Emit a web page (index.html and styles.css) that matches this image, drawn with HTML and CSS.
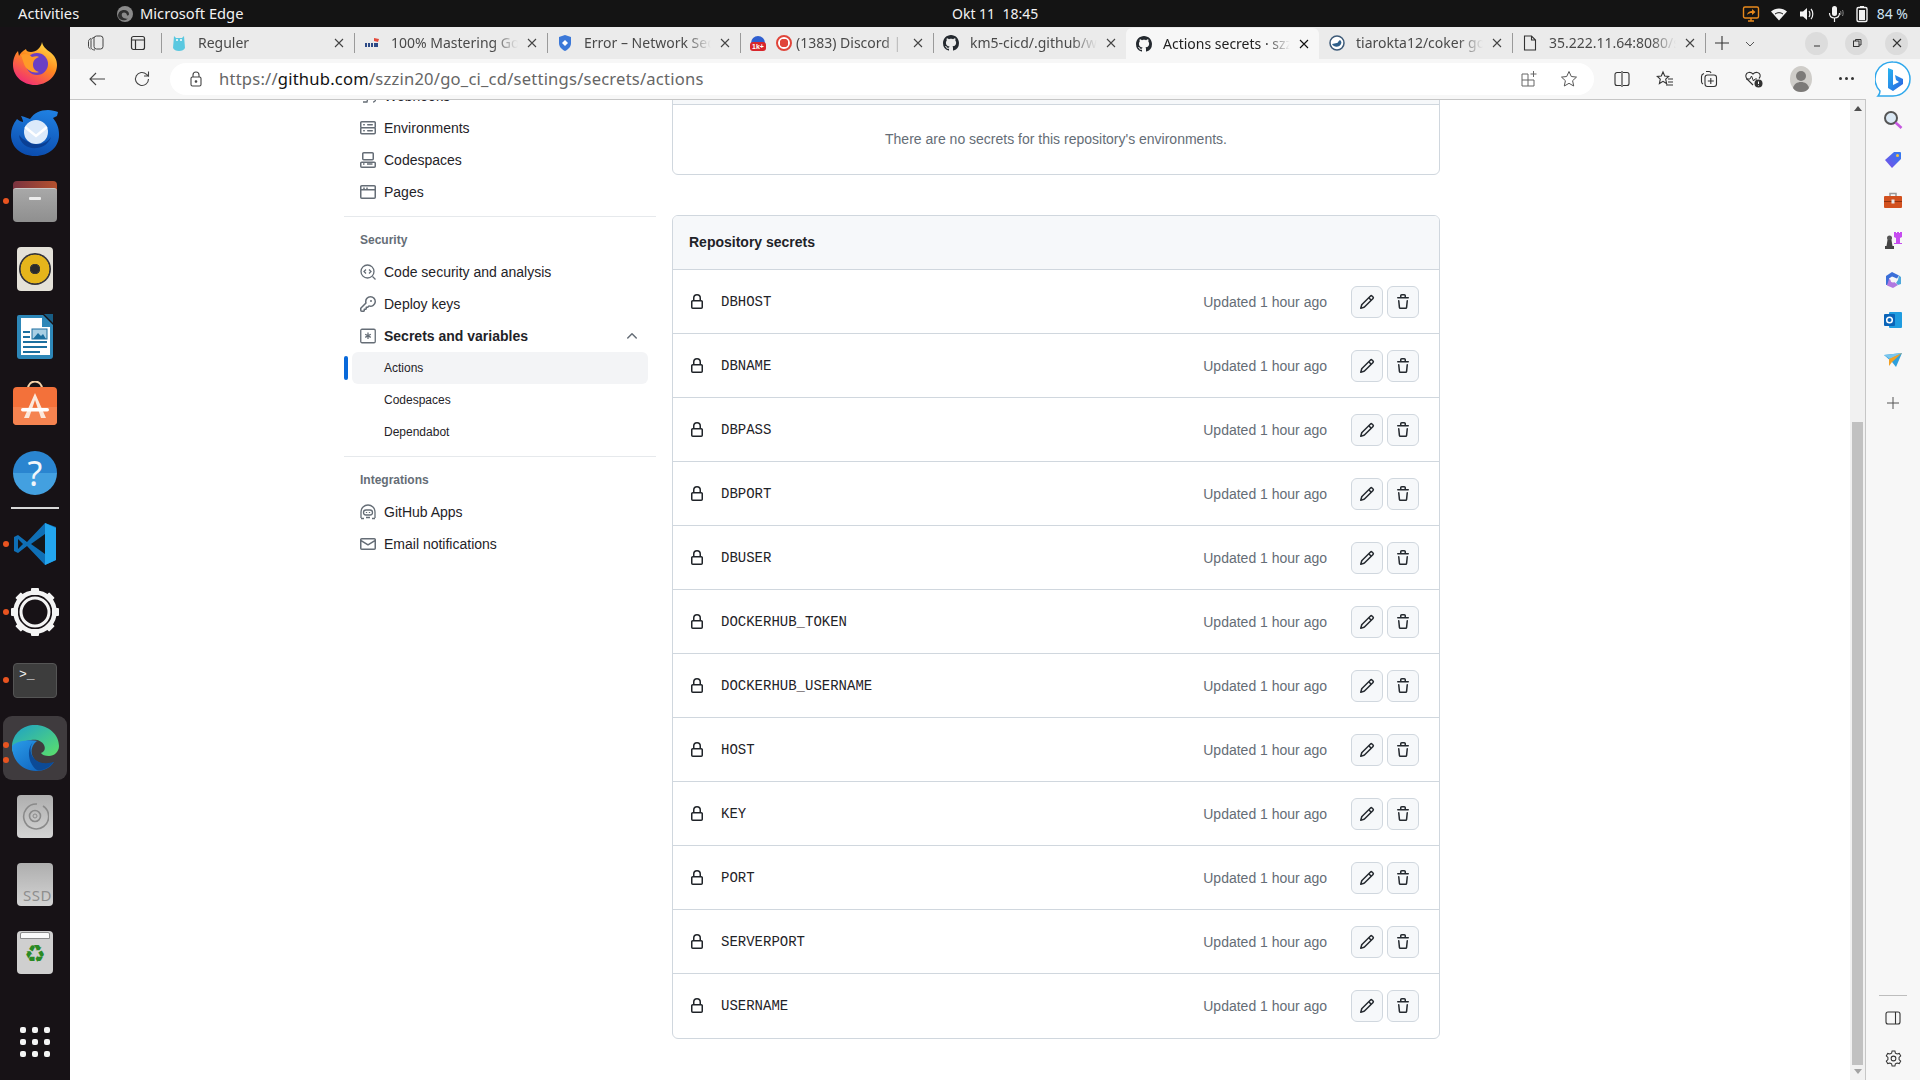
FILE: index.html
```html
<!DOCTYPE html>
<html lang="en">
<head>
<meta charset="utf-8">
<title>Actions secrets</title>
<link rel="stylesheet" href="styles.css">
</head>
<body>
<svg class="sprite" aria-hidden="true">
  <symbol id="i-lock" viewBox="0 0 16 16"><path d="M4 4a4 4 0 0 1 8 0v2h.25c.966 0 1.75.784 1.75 1.75v5.5A1.75 1.75 0 0 1 12.25 15h-8.5A1.75 1.75 0 0 1 2 13.25v-5.5C2 6.784 2.784 6 3.75 6H4Zm8.25 3.5h-8.5a.25.25 0 0 0-.25.25v5.5c0 .138.112.25.25.25h8.5a.25.25 0 0 0 .25-.25v-5.5a.25.25 0 0 0-.25-.25ZM10.5 6V4a2.5 2.5 0 1 0-5 0v2Z"/></symbol>
  <symbol id="i-pencil" viewBox="0 0 16 16"><path d="M11.013 1.427a1.75 1.75 0 0 1 2.474 0l1.086 1.086a1.75 1.75 0 0 1 0 2.474l-8.61 8.61c-.21.21-.47.364-.756.445l-3.251.93a.75.75 0 0 1-.927-.928l.929-3.25c.081-.286.235-.547.445-.758l8.61-8.61Zm.176 4.823L9.75 4.81l-6.286 6.287a.253.253 0 0 0-.064.108l-.558 1.953 1.953-.558a.253.253 0 0 0 .108-.064Zm1.238-3.763a.25.25 0 0 0-.354 0L10.811 3.75l1.439 1.44 1.263-1.263a.25.25 0 0 0 0-.354Z"/></symbol>
  <symbol id="i-trash" viewBox="0 0 16 16"><path d="M11 1.75V3h2.25a.75.75 0 0 1 0 1.5H2.75a.75.75 0 0 1 0-1.5H5V1.75C5 .784 5.784 0 6.75 0h2.5C10.216 0 11 .784 11 1.75ZM4.496 6.675l.66 6.6a.25.25 0 0 0 .249.225h5.19a.25.25 0 0 0 .249-.225l.66-6.6a.75.75 0 0 1 1.492.149l-.66 6.6A1.748 1.748 0 0 1 10.595 15h-5.19a1.75 1.75 0 0 1-1.741-1.575l-.66-6.6a.75.75 0 1 1 1.492-.15ZM6.5 1.75V3h3V1.75a.25.25 0 0 0-.25-.25h-2.5a.25.25 0 0 0-.25.25Z"/></symbol>
  <symbol id="i-gh" viewBox="0 0 16 16"><path d="M8 0c4.42 0 8 3.58 8 8a8.013 8.013 0 0 1-5.45 7.59c-.4.08-.55-.17-.55-.38 0-.27.01-1.13.01-2.2 0-.75-.25-1.23-.54-1.48 1.78-.2 3.65-.88 3.65-3.95 0-.88-.31-1.59-.82-2.15.08-.2.36-1.02-.08-2.12 0 0-.67-.22-2.2.82-.64-.18-1.32-.27-2-.27-.68 0-1.36.09-2 .27-1.53-1.03-2.2-.82-2.2-.82-.44 1.1-.16 1.92-.08 2.12-.51.56-.82 1.28-.82 2.15 0 3.06 1.86 3.75 3.64 3.95-.23.2-.44.55-.51 1.07-.46.21-1.61.55-2.33-.66-.15-.24-.6-.83-1.23-.82-.67.01-.27.38.01.53.34.19.73.9.82 1.13.16.45.68 1.31 2.69.94 0 .67.01 1.3.01 1.49 0 .21-.15.45-.55.38A7.995 7.995 0 0 1 0 8c0-4.42 3.58-8 8-8Z"/></symbol>
  <symbol id="i-x" viewBox="0 0 12 12"><path d="M2 2l8 8M10 2l-8 8" fill="none" stroke="currentColor" stroke-width="1.1"/></symbol>
</svg>

<header class="topbar">
  <span class="top-activities">Activities</span>
  <svg class="top-edge" width="18" height="18" viewBox="0 0 18 18"><circle cx="9" cy="9" r="8" fill="#8a8a8a"/><path d="M2 11c0-4 3-6 6-6 3 0 5 2 5 4 0 1-1 1.500-2 1.500 0-2-1.500-3-3-3-2.500 0-3 3-1 5 1 1 3 1.500 5 1-2 2-4 2-6 1.500-2-.5-4-2-4-4.500z" fill="#2e2e2e"/></svg>
  <span class="top-app">Microsoft Edge</span>
  <span class="top-clock">Okt 11&nbsp;&nbsp;18:45</span>
  <div class="tray">
    <svg width="18" height="18" viewBox="0 0 18 18"><rect x="1.500" y="2" width="15" height="11" rx="1.500" fill="none" stroke="#e8891c" stroke-width="1.400"/><path d="M5 10c.5-3 2.500-4 5-4V4l3.500 3L10 10V8c-2 0-3.500.5-5 2z" fill="#e8891c"/><path d="M6 16h6M9 13v3" stroke="#e8891c" stroke-width="1.400"/></svg>
    <svg width="18" height="18" viewBox="0 0 18 18"><path d="M1 6.500C5.500 2.500 12.500 2.500 17 6.500L9 15.500z" fill="#f2f2f2"/><path d="M5 9c2.400-1.800 5.600-1.800 8 0" fill="none" stroke="#141414" stroke-width="1"/></svg>
    <svg width="18" height="18" viewBox="0 0 18 18"><path d="M2 6.500h3L9 3v12l-4-3.500H2z" fill="#f2f2f2"/><path d="M11 6c1.200 1.500 1.200 4.500 0 6M13 4c2.400 2.500 2.400 7.500 0 10" fill="none" stroke="#f2f2f2" stroke-width="1.200"/></svg>
    <svg width="18" height="18" viewBox="0 0 18 18"><rect x="6" y="1" width="5" height="10" rx="2.500" fill="#f2f2f2"/><path d="M3.500 8c0 3.500 2.300 5 5 5s5-1.500 5-5M8.500 13v4" fill="none" stroke="#f2f2f2" stroke-width="1.200"/><path d="M14.500 6c.6 1 .6 3 0 4M16.500 5c.8 1.500.8 4.500 0 6" fill="none" stroke="#888" stroke-width="1"/></svg>
    <svg class="tray-batt" width="14" height="18" viewBox="0 0 14 18"><path d="M5 1h4v1.500H5z" fill="#f2f2f2"/><rect x="2" y="2.500" width="10" height="14" rx="1.500" fill="none" stroke="#f2f2f2" stroke-width="1.400"/><rect x="4" y="5" width="6" height="10" fill="#f2f2f2"/></svg>
    <span class="tray-pct">84 %</span>
  </div>
</header>

<div class="desktop">
  <nav class="dock">
    <div class="dock-item">
      <svg class="dock-ff" width="44" height="44" viewBox="0 0 44 44"><defs><linearGradient id="ff1" x1="0.8" y1="0" x2="0.2" y2="1"><stop offset="0" stop-color="#ffe14a"/><stop offset=".45" stop-color="#ff8a1f"/><stop offset="1" stop-color="#f0247e"/></linearGradient></defs><path d="M29 1c1 5 4 7 8 10 5 4 7 8 7 13 0 11-10 20-22 20S0 35 0 24c0-6 2-11 5-14l1 5c1-2 3-5 7-7 0 2 2 3 5 3 5 0 10-4 11-10z" fill="url(#ff1)"/><circle cx="24" cy="23" r="11" fill="#6b3fc4"/><path d="M8 14c4-2 8-1 11 2 3-1 6-1 7 0-3 1-6 3-6 8 0 3 2 6 6 7-6 2-13-2-15-8-1-3-2-6-3-9z" fill="#ff9a28"/></svg>
    </div>
    <div class="dock-item">
      <svg width="48" height="48" viewBox="0 0 48 48"><defs><linearGradient id="tb1" x1="0.6" y1="0" x2="0.4" y2="1"><stop offset="0" stop-color="#1f7fe0"/><stop offset="1" stop-color="#0b4cae"/></linearGradient></defs><path d="M47 3c-3-1-6-2-10-2-8 0-14 3-18 9-5-2-8-3-9-3 1 2 2 4 2 6-1 0-4-1-6-3C2 15 0 20 0 26c0 12 10 21 24 21s24-9 24-21c0-7-2-12-6-17l4-2z" fill="url(#tb1)"/><path d="M8 26c1 9 9 14 18 13 7-1 12-5 14-11-3 5-9 8-15 7-7-1-13-4-17-9z" fill="#0a3f94"/><circle cx="25" cy="23" r="12" fill="#dceafa"/><path d="M14 18l11 9 11-9" fill="none" stroke="#fff" stroke-width="2.500"/></svg>
    </div>
    <div class="dock-item has-dot">
      <div class="ic-files"><span class="ic-files-tab"></span><span class="ic-files-body"><i></i></span></div>
    </div>
    <div class="dock-item">
      <div class="ic-tile ic-rhythm"><span class="ic-speaker"></span></div>
    </div>
    <div class="dock-item">
      <svg width="38" height="46" viewBox="0 0 38 46"><path d="M3 1h24l10 10v31a3 3 0 0 1-3 3H4a3 3 0 0 1-3-3V3a2 2 0 0 1 2-2z" fill="#2d87b8"/><path d="M5 4h21v9h8v28H5z" fill="#fff"/><path d="M28 0l9 9v-9z" fill="#185d84"/><path d="M7 17h7v2H7zM7 22h7v2H7zM7 27h24v2H7zM7 32h24v2H7zM7 37h17v2H7z" fill="#1c6f9f"/><rect x="16" y="15" width="15" height="10" fill="#a9cfe4" stroke="#1c6f9f"/><path d="M17 25l5-6 3 3 2-2 3 5z" fill="#1c6f9f"/></svg>
    </div>
    <div class="dock-item">
      <svg class="dock-shop" width="44" height="44" viewBox="0 0 44 44"><path d="M15 8c0-10 14-10 14 0" fill="none" stroke="#f6d2a8" stroke-width="2"/><rect y="6" width="44" height="38" rx="4" fill="#f3713a"/><path d="M0 26h44v14a4 4 0 0 1-4 4H4a4 4 0 0 1-4-4z" fill="#f58350"/><path d="M22 12L11 37h5l6-18 6 18h5z" fill="#fbe8dc"/><rect x="8" y="27" width="28" height="3.500" rx="1.700" fill="#fff"/></svg>
    </div>
    <div class="dock-item">
      <div class="ic-help">?</div>
    </div>
    <div class="dock-sep"></div>
    <div class="dock-item has-dot">
      <svg width="44" height="44" viewBox="0 0 44 44"><path d="M32 1L14 20 5 13 1 15v14l4 2 9-7 18 19 11-5V5z" fill="#0f6fb6"/><path d="M32 1l11 5v32l-11 5z" fill="#23a5ee"/><path d="M32 12v20L18 22z" fill="#14161a"/><path d="M5 17l5 5-5 5z" fill="#14161a"/></svg>
    </div>
    <div class="dock-item has-dot">
      <svg width="48" height="48" viewBox="0 0 48 48"><circle cx="24" cy="24" r="19.500" fill="none" stroke="#f4f4f4" stroke-width="4.500"/><g fill="#f4f4f4"><rect x="20" y="0" width="8" height="7" rx="1"/><rect x="20" y="41" width="8" height="7" rx="1"/><rect x="0" y="20" width="7" height="8" rx="1"/><rect x="41" y="20" width="7" height="8" rx="1"/><rect x="20" y="0" width="8" height="7" rx="1" transform="rotate(45 24 24)"/><rect x="20" y="0" width="8" height="7" rx="1" transform="rotate(135 24 24)"/><rect x="20" y="0" width="8" height="7" rx="1" transform="rotate(225 24 24)"/><rect x="20" y="0" width="8" height="7" rx="1" transform="rotate(315 24 24)"/></g><circle cx="24" cy="24" r="14" fill="none" stroke="#f4f4f4" stroke-width="3"/></svg>
    </div>
    <div class="dock-item has-dot">
      <div class="ic-term"><span>&gt;_</span></div>
    </div>
    <div class="dock-item dock-active has-dots">
      <svg width="48" height="48" viewBox="0 0 48 48"><defs><linearGradient id="ed1" x1="0" y1="0" x2="1" y2="1"><stop offset="0" stop-color="#1da0c8"/><stop offset="1" stop-color="#5ce06a"/></linearGradient><linearGradient id="ed2" x1="0" y1="0" x2="1" y2="1"><stop offset="0" stop-color="#2a9be8"/><stop offset="1" stop-color="#0b5bb8"/></linearGradient></defs><path d="M1 22C2 9 12 1 24 1c14 0 24 10 24 21 0 6-5 10-10 10-4 0-7-1-8-3 3-1 5-4 3-8-2-4-7-6-13-5C12 17 5 20 1 28z" fill="url(#ed1)"/><path d="M1 22c0 14 10 25 24 25 8 0 14-3 18-9-4 2-9 3-14 1-8-3-11-12-6-19 1-1 2-3 4-3-9-2-22 0-26 5z" fill="url(#ed2)"/><path d="M22 18c-5 7-2 16 6 20 5 2 11 1 15 0-5 6-11 9-17 8-7-4-12-19-4-28z" fill="#0c4a96"/></svg>
    </div>
    <div class="dock-item">
      <div class="ic-tile ic-gray"><svg width="28" height="28" viewBox="0 0 28 28"><path d="M22 4a12.500 12.500 0 1 1-6-2" fill="none" stroke="#8a8a8a" stroke-width="1.600"/><circle cx="14" cy="14" r="5.500" fill="none" stroke="#8a8a8a" stroke-width="1.600"/><circle cx="14" cy="14" r="2" fill="none" stroke="#8a8a8a" stroke-width="1"/></svg></div>
    </div>
    <div class="dock-item">
      <div class="ic-tile ic-gray ic-ssd">SSD</div>
    </div>
    <div class="dock-item">
      <div class="ic-tile ic-gray ic-trash"><span class="ic-trash-lid"></span><span class="ic-trash-sym">♻</span></div>
    </div>
    <div class="dock-grid">
      <i></i><i></i><i></i><i></i><i></i><i></i><i></i><i></i><i></i>
    </div>
  </nav>

  <div class="browser">
    <div class="tabstrip">
      <div class="strip-tools">
        <svg width="18" height="18" viewBox="0 0 18 18" fill="none" stroke="#444" stroke-width="1"><rect x="7" y="2" width="9" height="13" rx="2.500"/><path d="M7 3.500c-1.500.5-3 1-3 3v7c0 1.500 2 2.500 4 2.500M4 4.500c-1.500.5-2.500 1.500-2.500 3v5c0 1 1 2 2 2.500"/></svg>
        <svg width="16" height="16" viewBox="0 0 16 16" fill="none" stroke="#333" stroke-width="1.200"><rect x="1.500" y="1.500" width="13" height="13" rx="2"/><path d="M1.500 5h13M5.500 5v9.500"/></svg>
      </div>
      <div class="tab">
        <span class="tab-ic"><svg width="14" height="18" viewBox="0 0 14 18"><path d="M2 2l2 2h6l2-2 1 12c-1 2-3 3-6 3s-5-1-6-3z" fill="#5ac8e0"/><circle cx="5" cy="6" r="1" fill="#fff"/><circle cx="9" cy="6" r="1" fill="#fff"/></svg></span>
        <span class="tab-title">Reguler</span>
        <svg class="tab-x"><use href="#i-x"/></svg>
      </div>
      <div class="tab">
        <span class="tab-ic"><svg width="16" height="12" viewBox="0 0 16 12"><path d="M1 6h2v4H1zM4 6h2v4H4zM7 6h2v4H7z" fill="#2d4a86"/><path d="M10 6h4v4h-4z" fill="#2d4a86"/><path d="M10 1l5 1-1 3-4-1z" fill="#e34b3c"/></svg></span>
        <span class="tab-title">100% Mastering Golang</span>
        <svg class="tab-x"><use href="#i-x"/></svg>
      </div>
      <div class="tab">
        <span class="tab-ic"><svg width="14" height="16" viewBox="0 0 14 16"><path d="M7 0l6 2v6c0 4-3 6.500-6 8-3-1.500-6-4-6-8V2z" fill="#3b78d8"/><path d="M4 8l3-3 3 3-3 3z" fill="#fff"/></svg></span>
        <span class="tab-title">Error – Network Security</span>
        <svg class="tab-x"><use href="#i-x"/></svg>
      </div>
      <div class="tab">
        <span class="tab-ic"><svg width="16" height="18" viewBox="0 0 16 18"><path d="M1 9a7 7 0 0 1 14 0z" fill="#2f5fd0"/><rect y="8" width="16" height="9" rx="3" fill="#d8262c"/><text x="8" y="15" class="tab-badge">1k+</text></svg></span>
        <span class="tab-rec"></span>
        <span class="tab-title tab-title-b">(1383) Discord | #general</span>
        <svg class="tab-x"><use href="#i-x"/></svg>
      </div>
      <div class="tab">
        <span class="tab-ic"><svg class="ic-gh" width="16" height="16"><use href="#i-gh"/></svg></span>
        <span class="tab-title">km5-cicd/.github/workflows</span>
        <svg class="tab-x"><use href="#i-x"/></svg>
      </div>
      <div class="tab tab-active">
        <span class="tab-ic"><svg class="ic-gh" width="16" height="16"><use href="#i-gh"/></svg></span>
        <span class="tab-title">Actions secrets · szzin20/go</span>
        <svg class="tab-x"><use href="#i-x"/></svg>
      </div>
      <div class="tab tab-after">
        <span class="tab-ic"><svg width="16" height="16" viewBox="0 0 16 16"><circle cx="8" cy="8" r="7" fill="#fff" stroke="#3d5a78" stroke-width="1.500"/><path d="M3 9c2 0 3-1 5-1 1 0 1-2 3-3 1 1 2 2 1 4-1 3-7 4-9 0z" fill="#2f5f8a"/></svg></span>
        <span class="tab-title">tiarokta12/coker golang</span>
        <svg class="tab-x"><use href="#i-x"/></svg>
      </div>
      <div class="tab">
        <span class="tab-ic"><svg width="14" height="16" viewBox="0 0 14 16" fill="none" stroke="#333" stroke-width="1.100"><path d="M1.500 1h7l4 4v10h-11zM8.500 1v4h4"/></svg></span>
        <span class="tab-title">35.222.11.64:8080/swagger</span>
        <svg class="tab-x"><use href="#i-x"/></svg>
      </div>
      <div class="tab-new">
        <svg width="16" height="16" viewBox="0 0 16 16"><path d="M8 1v14M1 8h14" stroke="#333" stroke-width="1.100"/></svg>
        <svg class="tab-more" width="10" height="6" viewBox="0 0 10 6"><path d="M1 1l4 4 4-4" fill="none" stroke="#555" stroke-width="1"/></svg>
      </div>
      <div class="win-btns">
        <span class="win-btn"><svg width="10" height="10" viewBox="0 0 10 10"><path d="M2 8h6" stroke="#333"/></svg></span>
        <span class="win-btn"><svg width="10" height="10" viewBox="0 0 10 10" fill="none" stroke="#333"><rect x="1.500" y="3" width="5.500" height="5.500"/><path d="M3.500 3V1.500H9v5.500H7"/></svg></span>
        <span class="win-btn"><svg width="10" height="10" viewBox="0 0 10 10"><path d="M1 1l8 8M9 1l-8 8" stroke="#333" stroke-width="1.100"/></svg></span>
      </div>
    </div>

    <div class="browser-body">
      <div class="viewport-col">
        <div class="toolbar">
          <div class="nav-btns">
            <svg width="18" height="16" viewBox="0 0 18 16"><path d="M17 8H2M8 2L2 8l6 6" fill="none" stroke="#444" stroke-width="1.100"/></svg>
            <svg width="18" height="18" viewBox="0 0 18 18"><path d="M15.500 9a6.500 6.500 0 1 1-2-4.700L15.500 6V1.500M15.500 6H11" fill="none" stroke="#444" stroke-width="1.100"/></svg>
          </div>
          <div class="address">
            <svg class="addr-lock" width="14" height="16" viewBox="0 0 14 16" fill="none" stroke="#444" stroke-width="1.100"><rect x="2" y="6" width="10" height="9" rx="1.500"/><path d="M4 6V4a3 3 0 0 1 6 0v2"/><circle cx="7" cy="10.500" r=".8" fill="#444"/></svg>
            <span class="url">https://<b>github.com</b>/szzin20/go_ci_cd/settings/secrets/actions</span>
            <svg class="addr-apps" width="18" height="18" viewBox="0 0 18 18" fill="none" stroke="#666" stroke-width="1"><path d="M8 4H2v12h12v-6M2 10h12M8 4v12"/><path d="M13.500 1v6M10.500 4h6"/></svg>
            <svg class="addr-star" width="18" height="18" viewBox="0 0 18 18"><path d="M9 1.500l2.300 5 5.200.6-3.900 3.600 1.100 5.300L9 13.300 4.300 16l1.100-5.300L1.500 7.100l5.200-.6z" fill="none" stroke="#555" stroke-width="1"/></svg>
          </div>
          <div class="tool-icons">
            <svg width="16" height="16" viewBox="0 0 16 16" fill="none" stroke="#333" stroke-width="1.100"><path d="M7 1.500H3a2 2 0 0 0-2 2v9a2 2 0 0 0 2 2h4M9 1.500h4a2 2 0 0 1 2 2v9a2 2 0 0 1-2 2H9M8 0v16"/></svg>
            <svg width="18" height="18" viewBox="0 0 18 18" fill="none" stroke="#333" stroke-width="1.100"><path d="M7 2l1.700 4 4 .4-3 2.800.9 4.300L7 11.300 3.400 13.500l.9-4.300-3-2.800 4-.4zM12 9h5M12 12h5M10 15h7"/></svg>
            <svg width="18" height="18" viewBox="0 0 18 18" fill="none" stroke="#333" stroke-width="1.100"><path d="M6 1.500h3a2 2 0 0 1 2 1.500M4 3.500C2.500 4 1.500 5 1.500 6.500v5c0 1 .5 2 1.500 2.500"/><rect x="5" y="5" width="11.500" height="11.500" rx="2.500"/><path d="M10.800 8v6M7.800 11h6"/></svg>
            <svg width="20" height="20" viewBox="0 0 20 20"><path d="M9 16L3 10C1 8 1.500 4 4.500 3.500 6.500 3 8 4 9 5c1-1 2.500-2 4.500-1.500 3 .5 3.500 4 1.500 6" fill="none" stroke="#333" stroke-width="1.100"/><path d="M2 10h4l1.500-3 2 5 1.500-2h2" fill="none" stroke="#333" stroke-width="1"/><circle cx="14.500" cy="14.500" r="4" fill="#333"/><path d="M14.500 12.500v2.500M14.500 16v.6" stroke="#fff"/></svg>
            <svg class="avatar" width="22" height="26" viewBox="0 0 22 26"><ellipse cx="11" cy="13" rx="11" ry="13" fill="#cfcdc9"/><circle cx="11" cy="10" r="5" fill="#7c7a78"/><path d="M3 22c1-4 4-6 8-6s7 2 8 6c-2 3-5 4-8 4s-6-1-8-4z" fill="#7c7a78"/></svg>
            <span class="more"><i></i><i></i><i></i></span>
          </div>
        </div>

        <div class="viewport">
          <div class="page">
            <aside class="side">
              <div class="side-group">
                <a class="side-row"><svg class="oc oc-line" viewBox="0 0 16 16"><path d="M3 14h4l1-5M8 2.500a2.500 2.500 0 0 0-2.300 3.500L3 10.500M13 14a2.500 2.500 0 1 0-2-4H6"/></svg>Webhooks</a>
                <a class="side-row"><svg class="oc" viewBox="0 0 16 16"><path d="M1.750 1h12.500c.966 0 1.750.784 1.750 1.750v4c0 .372-.116.717-.314 1 .198.283.314.628.314 1v4a1.750 1.750 0 0 1-1.750 1.750H1.750A1.750 1.750 0 0 1 0 12.750v-4c0-.358.109-.707.314-1a1.739 1.739 0 0 1-.314-1v-4C0 1.784.784 1 1.750 1ZM1.500 2.750v4c0 .138.112.25.25.25h12.500a.25.25 0 0 0 .25-.25v-4a.25.25 0 0 0-.25-.25H1.750a.25.25 0 0 0-.25.25Zm.25 5.750a.25.25 0 0 0-.25.25v4c0 .138.112.25.25.25h12.500a.25.25 0 0 0 .25-.25v-4a.25.25 0 0 0-.25-.25ZM7 4.750A.75.75 0 0 1 7.750 4h4.500a.75.75 0 0 1 0 1.500h-4.500A.75.75 0 0 1 7 4.750ZM7.750 10h4.500a.75.75 0 0 1 0 1.500h-4.500a.75.75 0 0 1 0-1.500ZM3 4.750A.75.75 0 0 1 3.750 4h.5a.75.75 0 0 1 0 1.500h-.5A.75.75 0 0 1 3 4.750ZM3.750 10h.5a.75.75 0 0 1 0 1.500h-.5a.75.75 0 0 1 0-1.500Z"/></svg>Environments</a>
                <a class="side-row"><svg class="oc" viewBox="0 0 16 16"><path d="M0 11.250c0-.966.784-1.750 1.750-1.750h12.500c.966 0 1.750.784 1.750 1.750v3A1.750 1.750 0 0 1 14.250 16H1.750A1.750 1.750 0 0 1 0 14.250Zm2-9.500C2 .784 2.784 0 3.750 0h8.500C13.216 0 14 .784 14 1.750v5a1.750 1.750 0 0 1-1.750 1.750h-8.500A1.750 1.750 0 0 1 2 6.750Zm1.750-.25a.25.25 0 0 0-.25.25v5c0 .138.112.25.25.25h8.500a.25.25 0 0 0 .25-.25v-5a.25.25 0 0 0-.25-.25Zm-2 9.500a.25.25 0 0 0-.25.25v3c0 .138.112.25.25.25h12.500a.25.25 0 0 0 .25-.25v-3a.25.25 0 0 0-.25-.25Z"/><path d="M7 12.750h5.500v-1.500H7ZM3 12.750h1.500v-1.500H3Z"/></svg>Codespaces</a>
                <a class="side-row"><svg class="oc" viewBox="0 0 16 16"><path d="M0 2.750C0 1.784.784 1 1.750 1h12.500c.966 0 1.750.784 1.750 1.750v10.500A1.750 1.750 0 0 1 14.250 15H1.750A1.750 1.750 0 0 1 0 13.250ZM14.500 6.500h-13v6.750c0 .138.112.25.25.25h12.500a.25.25 0 0 0 .25-.25Zm0-3.750a.25.25 0 0 0-.25-.25H1.750a.25.25 0 0 0-.25.25V5h1.750V3.500h1.500V5h1.500V3.500h1.500V5h6.750Z"/></svg>Pages</a>
              </div>
              <div class="side-group side-ruled">
                <div class="side-head">Security</div>
                <a class="side-row"><svg class="oc oc-line" viewBox="0 0 16 16"><circle cx="7.500" cy="7.500" r="6.500"/><path d="M12.500 12.500L15.500 15.500M6 5.500L4 7.500l2 2M9 5.500l2 2-2 2"/></svg>Code security and analysis</a>
                <a class="side-row"><svg class="oc" viewBox="0 0 16 16"><path d="M10.500 0a5.499 5.499 0 1 1-1.288 10.848l-.932.932a.749.749 0 0 1-.53.22H7v.75a.749.749 0 0 1-.22.53l-.5.5a.749.749 0 0 1-.53.22H5v.75a.749.749 0 0 1-.22.53l-.5.5a.749.749 0 0 1-.53.22h-2A1.750 1.750 0 0 1 0 14.250v-2c0-.199.079-.389.22-.53l4.932-4.932A5.500 5.500 0 0 1 10.500 0Zm-4 5.500c-.001.431.069.86.205 1.269a.75.75 0 0 1-.181.768L1.500 12.560v1.690c0 .138.112.25.25.25h1.690l.06-.06v-1.190a.75.75 0 0 1 .75-.75h1.190l.06-.06v-1.190a.75.75 0 0 1 .75-.75h1.190l1.023-1.025a.75.75 0 0 1 .768-.18A4 4 0 1 0 6.500 5.500ZM11 6a1 1 0 1 1 0-2 1 1 0 0 1 0 2Z"/></svg>Deploy keys</a>
                <a class="side-row side-strong"><svg class="oc oc-line" viewBox="0 0 16 16"><rect x=".75" y="1.250" width="14.500" height="13.500" rx="1.250"/><path d="M8 4.500v6.500M5.200 6.200l5.600 3.200M10.800 6.200L5.200 9.400"/></svg>Secrets and variables<svg class="oc side-chev" viewBox="0 0 16 16"><path d="M3.220 10.530a.749.749 0 0 1 0-1.060l4.250-4.250a.749.749 0 0 1 1.060 0l4.250 4.250a.749.749 0 1 1-1.060 1.060L8 6.811 4.280 10.530a.749.749 0 0 1-1.060 0Z"/></svg></a>
                <a class="side-sub side-current">Actions</a>
                <a class="side-sub">Codespaces</a>
                <a class="side-sub">Dependabot</a>
              </div>
              <div class="side-group side-ruled">
                <div class="side-head">Integrations</div>
                <a class="side-row"><svg class="oc oc-line" viewBox="0 0 16 16"><path d="M1 14V8a7 7 0 0 1 14 0v6"/><path d="M1 14.500h3M12 14.500h3M6 13.500h4"/><rect x="3.500" y="6" width="9" height="5" rx="2.500"/><path d="M6.500 8v1M9.500 8v1"/></svg>GitHub Apps</a>
                <a class="side-row"><svg class="oc" viewBox="0 0 16 16"><path d="M1.750 2h12.500c.966 0 1.750.784 1.750 1.750v8.500A1.750 1.750 0 0 1 14.250 14H1.750A1.750 1.750 0 0 1 0 12.250v-8.500C0 2.784.784 2 1.750 2ZM1.500 12.251c0 .138.112.25.25.25h12.500a.25.25 0 0 0 .25-.25V5.809L8.380 9.397a.750.750 0 0 1-.76 0L1.500 5.809v6.442Zm13-8.181v-.32a.25.25 0 0 0-.25-.25H1.750a.25.25 0 0 0-.25.25v.32L8 7.880Z"/></svg>Email notifications</a>
              </div>
            </aside>

            <main class="content">
              <section class="box box-env">
                <div class="box-cut"></div>
                <p class="box-empty">There are no secrets for this repository's environments.</p>
              </section>
              <section class="box">
                <h3 class="box-head">Repository secrets</h3>
                <div class="secret"><svg class="oc lock"><use href="#i-lock"/></svg><code class="secret-name">DBHOST</code><span class="secret-when">Updated 1 hour ago</span><button class="act"><svg class="oc"><use href="#i-pencil"/></svg></button><button class="act"><svg class="oc"><use href="#i-trash"/></svg></button></div>
                <div class="secret"><svg class="oc lock"><use href="#i-lock"/></svg><code class="secret-name">DBNAME</code><span class="secret-when">Updated 1 hour ago</span><button class="act"><svg class="oc"><use href="#i-pencil"/></svg></button><button class="act"><svg class="oc"><use href="#i-trash"/></svg></button></div>
                <div class="secret"><svg class="oc lock"><use href="#i-lock"/></svg><code class="secret-name">DBPASS</code><span class="secret-when">Updated 1 hour ago</span><button class="act"><svg class="oc"><use href="#i-pencil"/></svg></button><button class="act"><svg class="oc"><use href="#i-trash"/></svg></button></div>
                <div class="secret"><svg class="oc lock"><use href="#i-lock"/></svg><code class="secret-name">DBPORT</code><span class="secret-when">Updated 1 hour ago</span><button class="act"><svg class="oc"><use href="#i-pencil"/></svg></button><button class="act"><svg class="oc"><use href="#i-trash"/></svg></button></div>
                <div class="secret"><svg class="oc lock"><use href="#i-lock"/></svg><code class="secret-name">DBUSER</code><span class="secret-when">Updated 1 hour ago</span><button class="act"><svg class="oc"><use href="#i-pencil"/></svg></button><button class="act"><svg class="oc"><use href="#i-trash"/></svg></button></div>
                <div class="secret"><svg class="oc lock"><use href="#i-lock"/></svg><code class="secret-name">DOCKERHUB_TOKEN</code><span class="secret-when">Updated 1 hour ago</span><button class="act"><svg class="oc"><use href="#i-pencil"/></svg></button><button class="act"><svg class="oc"><use href="#i-trash"/></svg></button></div>
                <div class="secret"><svg class="oc lock"><use href="#i-lock"/></svg><code class="secret-name">DOCKERHUB_USERNAME</code><span class="secret-when">Updated 1 hour ago</span><button class="act"><svg class="oc"><use href="#i-pencil"/></svg></button><button class="act"><svg class="oc"><use href="#i-trash"/></svg></button></div>
                <div class="secret"><svg class="oc lock"><use href="#i-lock"/></svg><code class="secret-name">HOST</code><span class="secret-when">Updated 1 hour ago</span><button class="act"><svg class="oc"><use href="#i-pencil"/></svg></button><button class="act"><svg class="oc"><use href="#i-trash"/></svg></button></div>
                <div class="secret"><svg class="oc lock"><use href="#i-lock"/></svg><code class="secret-name">KEY</code><span class="secret-when">Updated 1 hour ago</span><button class="act"><svg class="oc"><use href="#i-pencil"/></svg></button><button class="act"><svg class="oc"><use href="#i-trash"/></svg></button></div>
                <div class="secret"><svg class="oc lock"><use href="#i-lock"/></svg><code class="secret-name">PORT</code><span class="secret-when">Updated 1 hour ago</span><button class="act"><svg class="oc"><use href="#i-pencil"/></svg></button><button class="act"><svg class="oc"><use href="#i-trash"/></svg></button></div>
                <div class="secret"><svg class="oc lock"><use href="#i-lock"/></svg><code class="secret-name">SERVERPORT</code><span class="secret-when">Updated 1 hour ago</span><button class="act"><svg class="oc"><use href="#i-pencil"/></svg></button><button class="act"><svg class="oc"><use href="#i-trash"/></svg></button></div>
                <div class="secret"><svg class="oc lock"><use href="#i-lock"/></svg><code class="secret-name">USERNAME</code><span class="secret-when">Updated 1 hour ago</span><button class="act"><svg class="oc"><use href="#i-pencil"/></svg></button><button class="act"><svg class="oc"><use href="#i-trash"/></svg></button></div>
              </section>
            </main>
          </div>
          <div class="scrollbar">
            <span class="sb-up"></span>
            <span class="sb-gap"></span>
            <span class="sb-thumb"></span>
            <span class="sb-down"></span>
          </div>
        </div>
      </div>

      <aside class="rail">
        <div class="rail-bing">
          <svg width="36" height="38" viewBox="0 0 36 38"><defs><linearGradient id="bg1" x1="0" y1="0" x2="1" y2="1"><stop offset="0" stop-color="#27b6f0"/><stop offset="1" stop-color="#2a5fe0"/></linearGradient></defs><path d="M18 1a17 17 0 0 1 0 34H3c1-1 2-2 2-5A17 17 0 0 1 18 1z" fill="#fff" stroke="#2fa8ec" stroke-width="1.500"/><path d="M13 7l5 2v15l6-3-3-2-1-5 8 4v5l-10 7-5-3z" fill="url(#bg1)"/></svg>
        </div>
        <div class="rail-item"><svg width="20" height="20" viewBox="0 0 20 20"><circle cx="8" cy="8" r="6" fill="#dbe9f5" stroke="#555" stroke-width="2"/><path d="M12.500 12.500l6 5.500" stroke="#c658e0" stroke-width="2.600"/></svg></div>
        <div class="rail-item"><svg width="18" height="18" viewBox="0 0 18 18"><defs><linearGradient id="tg1" x1="0" y1="1" x2="1" y2="0"><stop offset="0" stop-color="#7a4ee8"/><stop offset="1" stop-color="#2f7cf0"/></linearGradient></defs><path d="M10 1h6a1 1 0 0 1 1 1v6L8 17 1 9z" fill="url(#tg1)"/><circle cx="13.500" cy="4.500" r="1.500" fill="#f6c440"/></svg></div>
        <div class="rail-item"><svg width="18" height="16" viewBox="0 0 18 16"><path d="M6 4V1.500h6V4" fill="none" stroke="#999" stroke-width="1.500"/><rect y="4" width="18" height="12" rx="1" fill="#d2501e"/><rect y="9" width="18" height="1" fill="#8e3210"/><rect x="7.500" y="7.500" width="3" height="4" fill="#e6e6e6"/></svg></div>
        <div class="rail-item"><svg width="18" height="18" viewBox="0 0 18 18"><path d="M10 1h2v1h1V1h2v1h1V1h2v5l-2 1v5h2v1h-8v-1h2V7l-2-1z" fill="#c64cf0"/><circle cx="5.500" cy="7" r="2.500" fill="#555"/><path d="M3.500 9h4l1 6h1.500v3H1v-3h1.500z" fill="#444"/></svg></div>
        <div class="rail-item"><svg width="18" height="18" viewBox="0 0 18 18"><path d="M8 1l7 3.500-2 3-5-2-3 2v6L2 14V5z" fill="#3b6fd8"/><path d="M15 4.500l2 1.500v7l-3 1-2-2 2-3z" fill="#4fa8dc"/><path d="M5 8l4 2 5 4-5 3-6-2.500z" fill="#b078e0"/><circle cx="9" cy="9" r="2.500" fill="#f7f7f7"/></svg></div>
        <div class="rail-item"><svg width="18" height="18" viewBox="0 0 18 18"><rect x="5" y="1" width="13" height="16" rx="1" fill="#1f9ce0"/><rect x="0" y="3" width="11" height="12" rx="1" fill="#0a64b8"/><circle cx="5.500" cy="9" r="2.800" fill="none" stroke="#fff" stroke-width="1.500"/></svg></div>
        <div class="rail-item"><svg width="18" height="16" viewBox="0 0 18 16"><path d="M0 3l18-2-6 14-4-5z" fill="#2fa0dc"/><path d="M0 3l18-2L6 7z" fill="#7ac6ee"/><path d="M18 1L5 7v7l3-4z" fill="#f2a023"/></svg></div>
        <div class="rail-item rail-plus"><svg width="14" height="14" viewBox="0 0 14 14"><path d="M7 1v12M1 7h12" stroke="#555" stroke-width="1"/></svg></div>
        <div class="rail-foot">
          <div class="rail-sep"></div>
          <div class="rail-item"><svg width="16" height="14" viewBox="0 0 16 14" fill="none" stroke="#333" stroke-width="1.100"><rect x="1" y="1" width="14" height="12" rx="2"/><path d="M10.500 1v12"/></svg></div>
          <div class="rail-item"><svg width="17" height="17" viewBox="0 0 18 18" fill="none" stroke="#333" stroke-width="1.100"><circle cx="9" cy="9" r="2.500"/><path d="M7.500 1h3l.5 2.300 1.800 1 2.300-.7 1.500 2.600-1.700 1.600v2.400l1.700 1.600-1.500 2.600-2.300-.7-1.800 1-.5 2.300h-3L7 14.700l-1.800-1-2.300.7-1.500-2.600 1.700-1.600V7.800L1.400 6.200l1.500-2.600 2.300.7 1.800-1z"/></svg></div>
        </div>
      </aside>
    </div>
  </div>
</div>
</body>
</html>
```
FILE: styles.css
```css
* { box-sizing: border-box; }
html, body { margin: 0; padding: 0; height: 100%; }
body {
  width: 1920px;
  height: 1080px;
  overflow: hidden;
  display: flex;
  flex-direction: column;
  font-family: "Liberation Sans", Arial, sans-serif;
  background: #fff;
}
.sprite { position: absolute; width: 0; height: 0; }

/* GNOME top bar */
.topbar {
  flex: 0 0 27px;
  display: flex;
  align-items: center;
  background: #141414;
  color: #f2f2f2;
  font: 14.7px "Noto Sans", sans-serif;
  position: relative;
}
.top-activities { margin-left: 18px; width: 98px; margin-bottom: 1px; }
.top-edge { margin-right: 6px; }
.top-app { margin-bottom: 1px; }
.top-clock { position: absolute; left: 952px; top: 4px; font-size: 14px; }
.tray { margin-left: auto; display: flex; align-items: center; gap: 10px; padding-right: 12px; font-size: 14px; }
.tray-batt { margin-left: 1px; margin-right: -2px; }
.tray-pct { color: #cfe4f4; }

.desktop { flex: 1; display: flex; min-height: 0; }

/* Dock */
.dock {
  flex: 0 0 70px;
  background: #171216;
  display: flex;
  flex-direction: column;
  align-items: center;
  padding-top: 4px;
}
.dock-item {
  flex: 0 0 68px;
  width: 64px;
  display: flex;
  align-items: center;
  justify-content: center;
  position: relative;
}
.dock-ff { margin-top: -4px; }
.dock-shop { margin-top: -5px; }
.has-dot::before, .has-dots::before, .has-dots::after {
  content: "";
  position: absolute;
  left: 0;
  top: 31px;
  width: 6px;
  height: 6px;
  border-radius: 50%;
  background: #e95420;
}
.has-dots::before { top: 26px; }
.has-dots::after { top: 41px; }
.dock-active { flex-basis: 64px; margin: 2px 0; background: #3f3b3e; border-radius: 9px; }
.dock-sep { flex: 0 0 2px; width: 48px; background: #d8d8d8; margin-bottom: 1px; }
.dock-grid {
  margin-top: auto;
  flex: 0 0 76px;
  display: grid;
  grid-template-columns: repeat(3, 6px);
  grid-auto-rows: 6px;
  gap: 6px;
  align-content: center;
  justify-content: center;
}
.dock-grid i { background: #f4f4f4; border-radius: 2px; }

.ic-files { width: 44px; height: 41px; position: relative; }
.ic-files-tab { position: absolute; left: 0; top: 0; width: 44px; height: 20px; background: linear-gradient(90deg, #7a3340, #b5512e); border-radius: 4px 4px 0 0; }
.ic-files-body { position: absolute; left: 0; top: 7px; right: 0; bottom: 0; background: linear-gradient(#a8a8a8, #8f8f8f); border-radius: 3px 3px 4px 4px; border-top: 1px solid #c9c9c9; display: block; }
.ic-files-body i { display: block; width: 12px; height: 3px; background: #ececec; border-radius: 1px; margin: 8px auto 0; }
.ic-tile { width: 36px; height: 43px; border-radius: 4px; display: flex; align-items: center; justify-content: center; position: relative; }
.ic-rhythm { background: #e4e1d8; height: 44px; }
.ic-speaker { width: 32px; height: 32px; border-radius: 50%; background: radial-gradient(circle, #2a2a2a 0 18%, #3a3a32 19% 22%, #e5b51b 24% 62%, #34343a 65% 100%); }
.ic-help { width: 44px; height: 44px; border-radius: 50%; background: linear-gradient(#2a85d0 50%, #43a0e0 50%); color: #f2f6fa; font: 34px/44px "Noto Sans", sans-serif; text-align: center; }
.ic-term { width: 44px; height: 35px; border-radius: 4px; background: #3d3d3d; border: 1px solid #555; color: #f4f4f4; font: 13px/14px "Liberation Mono", monospace; padding: 4px 5px; }
.ic-gray { background: linear-gradient(#aeaeae, #d4d4d4); }
.ic-ssd { color: #8e8e8e; font: 15px "Noto Sans", sans-serif; align-items: flex-end; padding-bottom: 1px; letter-spacing: .5px; justify-content: flex-end; padding-right: 1px; }
.ic-trash { flex-direction: column; justify-content: flex-start; background: #cfcfcf; }
.ic-trash-lid { width: 30px; height: 7px; margin-top: 1px; background: #fafafa; border: 1px solid #8a8a8a; border-radius: 2px 2px 0 0; }
.ic-trash-sym { color: #2a8a24; font: 24px/30px "DejaVu Sans", sans-serif; }

/* Edge window */
.browser { flex: 1; min-width: 0; display: flex; flex-direction: column; }
.tabstrip {
  flex: 0 0 32px;
  display: flex;
  align-items: stretch;
  background: #ebebeb;
  font: 14px "Noto Sans", sans-serif;
  color: #4a4a4a;
}
.strip-tools { flex: 0 0 91px; display: flex; align-items: center; gap: 25px; padding-left: 17px; }
.tab {
  flex: 0 0 193px;
  min-width: 0;
  display: flex;
  align-items: center;
  position: relative;
  padding-left: 37px;
  padding-right: 9px;
}
.tab::before {
  content: "";
  position: absolute;
  left: 0;
  top: 6px;
  bottom: 6px;
  width: 1px;
  background: #9a9a9a;
}
.tab-active::before, .tab-after::before { display: none; }
.tab-active { background: #f7f7f7; color: #222; border-radius: 6px 6px 0 0; margin-top: 1px; }
.tab-ic { position: absolute; left: 9px; width: 18px; display: flex; justify-content: center; }
.tab-rec { position: absolute; left: 36px; width: 16px; height: 16px; border-radius: 50%; border: 2px solid #e0453a; background: radial-gradient(circle, #e0453a 0 50%, #fff 52%); }
.tab-title { flex: 1; min-width: 0; white-space: nowrap; overflow: hidden; -webkit-mask-image: linear-gradient(90deg, #000 80%, transparent 100%); mask-image: linear-gradient(90deg, #000 80%, transparent 100%); margin-right: 8px; margin-bottom: 1px; }
.tab-title-b { margin-left: 19px; }
.tab-badge { font: bold 7px "Liberation Sans", sans-serif; fill: #fff; text-anchor: middle; }
.tab-x { flex: 0 0 12px; width: 12px; height: 12px; color: #444; }
.tab-active .tab-x { color: #111; }
.ic-gh { fill: #24292f; display: block; }
.tab-new { position: relative; flex: 0 0 60px; display: flex; align-items: center; gap: 16px; padding-left: 9px; }
.tab-new::before { content: ""; position: absolute; left: 0; top: 6px; bottom: 6px; width: 1px; background: #9a9a9a; }
.tab-more { margin-top: 1px; margin-left: -1px; }
.win-btns { margin-left: auto; display: flex; align-items: center; gap: 17px; padding-right: 12px; }
.win-btn { width: 23px; height: 23px; border-radius: 50%; background: #dcdcdc; display: flex; align-items: center; justify-content: center; }

.browser-body { flex: 1; min-height: 0; display: flex; }
.viewport-col { flex: 1; min-width: 0; display: flex; flex-direction: column; }
.toolbar {
  flex: 0 0 41px;
  display: flex;
  align-items: center;
  background: #f7f7f7;
  border-bottom: 1px solid #c6c6c6;
  padding-bottom: 1px;
}
.nav-btns { flex: 0 0 100px; display: flex; align-items: center; gap: 27px; padding-left: 18px; }
.address {
  flex: 0 0 1424px;
  height: 32px;
  border-radius: 16px;
  background: #fff;
  display: flex;
  align-items: center;
  padding-left: 19px;
  padding-right: 16px;
}
.addr-lock { margin-right: 16px; }
.url { flex: 1; font: 16.6px "Noto Sans", sans-serif; color: #666; letter-spacing: .2px; }
.url b { font-weight: 400; color: #111; }
.addr-apps { margin-right: 22px; }
.tool-icons { flex: 1; display: flex; align-items: center; padding-left: 20px; gap: 26px; }
.more { display: flex; gap: 3px; margin-left: 1px; }
.more i { width: 3px; height: 3px; background: #333; border-radius: 50%; }

.viewport { flex: 1; min-height: 0; display: flex; }
.page {
  flex: 1;
  min-width: 0;
  overflow: hidden;
  display: flex;
  align-items: flex-start;
  gap: 16px;
  padding-left: 274px;
  background: #fff;
}
.side { flex: 0 0 312px; margin-top: -20px; color: #1f2328; font-size: 14px; }
.side-ruled { border-top: 1px solid #e6e9ec; margin-top: 8px; padding-top: 7px; }
.side-group { display: flex; flex-direction: column; }
.side-head { height: 32px; line-height: 32px; padding-left: 16px; font-size: 12px; font-weight: 700; color: #656d76; }
.side-row { height: 32px; display: flex; align-items: center; gap: 8px; padding-left: 16px; padding-right: 16px; position: relative; }
.oc { width: 16px; height: 16px; flex: 0 0 16px; fill: currentColor; }
.oc-line { fill: none; stroke: currentColor; stroke-width: 1.3; }
.side-row > .oc { color: #656d76; }
.side-chev { margin-left: auto; }
.side-strong { font-weight: 700; }
.side-sub { height: 32px; line-height: 32px; font-size: 12px; padding-left: 32px; margin: 0 8px; border-radius: 6px; position: relative; }
.side-current { background: #f3f4f6; }
.side-current::before { content: ""; position: absolute; left: -8px; top: 4px; bottom: 4px; width: 4px; background: #0969da; border-radius: 2px; }

.content { flex: 0 0 768px; margin-top: -20px; display: flex; flex-direction: column; gap: 40px; color: #1f2328; }
.box { border: 1px solid #d0d7de; border-radius: 6px; overflow: hidden; background: #fff; }
.box-cut { height: 24px; border-bottom: 1px solid #d0d7de; background: #f6f8fa; }
.box-empty { margin: 0; height: 69px; line-height: 68px; text-align: center; font-size: 14px; color: #656d76; }
.box-head { margin: 0; height: 54px; line-height: 52px; padding-left: 16px; background: #f6f8fa; font-size: 14px; font-weight: 700; border-bottom: 1px solid #d0d7de; }
.secret { height: 64px; display: flex; align-items: center; padding: 0 20px 0 16px; border-bottom: 1px solid #d0d7de; }
.secret:last-child { border-bottom: 0; }
.lock { margin-right: 16px; }
.secret-name { flex: 1; font: 14px "Liberation Mono", monospace; }
.secret-when { font-size: 14px; color: #656d76; margin-right: 24px; }
.act { width: 32px; height: 32px; margin-left: 4px; padding: 0; border: 1px solid #d0d7de; border-radius: 6px; background: #f6f8fa; color: #24292f; display: flex; align-items: center; justify-content: center; }
.secret-when + .act { margin-left: 0; }

.scrollbar { flex: 0 0 16px; display: flex; flex-direction: column; align-items: center; background: #f1f1f1; border-right: 1px solid #c6c6c6; }
.sb-up, .sb-down { width: 0; height: 0; border-left: 4px solid transparent; border-right: 4px solid transparent; }
.sb-up { border-bottom: 5px solid #505050; margin-top: 6px; flex: 0 0 5px; }
.sb-gap { flex: 0 0 311px; }
.sb-thumb { flex: 1; width: 11px; background: #c1c1c1; margin-right: 1px; }
.sb-down { border-top: 5px solid #a3a3a3; flex: 0 0 5px; margin: 4px 0 6px; }

.rail { flex: 0 0 54px; background: #f7f7f7; display: flex; flex-direction: column; align-items: center; }
.rail-bing { flex: 0 0 41px; display: flex; align-items: center; justify-content: center; }
.rail-item { flex: 0 0 40px; display: flex; align-items: center; justify-content: center; }
.rail-plus { margin-top: 3px; }
.rail-foot { margin-top: auto; display: flex; flex-direction: column; align-items: center; padding-bottom: 2px; }
.rail-sep { width: 28px; height: 1px; background: #bdbdbd; margin-bottom: 2px; }
```
